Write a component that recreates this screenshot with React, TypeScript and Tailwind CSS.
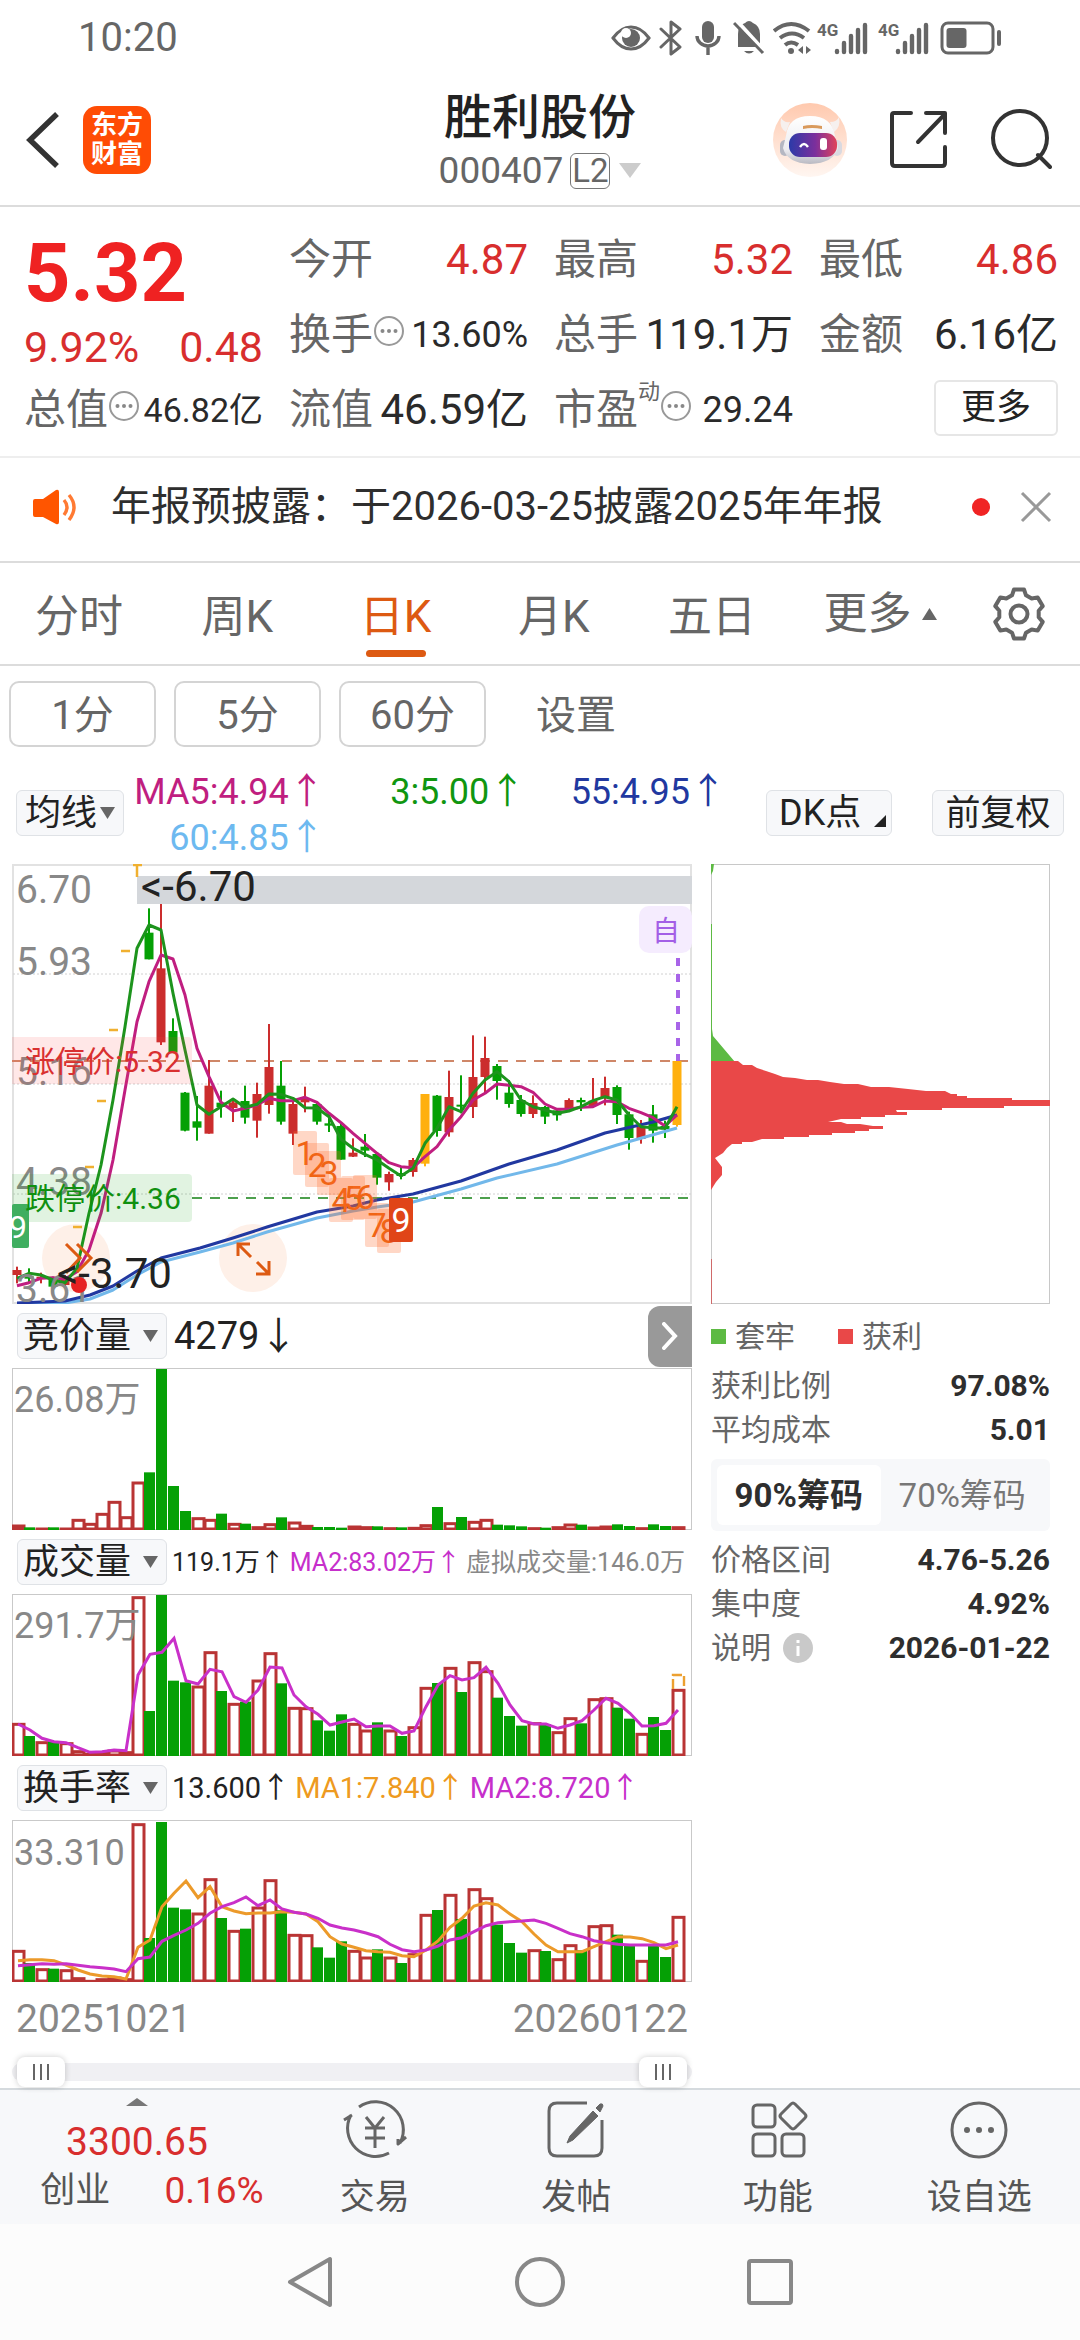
import { useState, type ReactNode } from "react";

/* ---------- chart data ---------- */

type Tone = "r" | "g" | "y";
// tone, wick top, body top, body bottom, wick bottom (thirds of a pixel from y = 850)
type Candle = [Tone, number, number, number, number];

const CANDLES: (Candle | null)[] = [
  ["r", 1250, 1260, 1275, 1300], ["g", 1255, 1278, 1286, 1300], ["r", 1268, 1280, 1286, 1300], ["g", 1280, 1288, 1310, 1325], ["r", 1275, 1290, 1305, 1312],
  null, null, null, null, null, null,
  ["g", 175, 248, 328, 328], ["r", 162, 355, 577, 585], ["g", 505, 543, 608, 608], ["g", 726, 728, 842, 844], ["g", 738, 814, 833, 872],
  ["r", 630, 707, 851, 851], ["g", 722, 758, 771, 803], ["r", 745, 757, 774, 816], ["g", 707, 753, 803, 821], ["r", 698, 732, 812, 863],
  ["r", 522, 651, 765, 791], ["g", 633, 707, 815, 824], ["r", 755, 762, 851, 885], ["r", 710, 744, 757, 787], ["g", 758, 762, 815, 824],
  ["g", 790, 820, 827, 846], ["g", 820, 828, 929, 929], ["r", 865, 908, 920, 921], ["g", 852, 890, 902, 921], ["g", 906, 912, 983, 1004],
  ["r", 965, 972, 997, 1022], ["g", 950, 969, 978, 988], ["r", 924, 930, 966, 980], ["y", 732, 732, 941, 949], ["g", 735, 737, 843, 860],
  ["r", 662, 741, 847, 860], ["g", 676, 764, 770, 790], ["r", 556, 681, 771, 804], ["r", 560, 624, 681, 730], ["g", 642, 648, 693, 749],
  ["g", 690, 728, 762, 773], ["g", 735, 750, 792, 800], ["r", 736, 759, 792, 804], ["g", 768, 771, 800, 822], ["g", 775, 781, 796, 812],
  ["r", 745, 750, 775, 780], ["g", 743, 750, 757, 783], ["r", 684, 752, 768, 772], ["r", 680, 714, 745, 766], ["g", 706, 711, 795, 822],
  ["g", 785, 793, 864, 899], ["r", 810, 830, 867, 881], ["g", 765, 793, 842, 878], ["g", 812, 828, 838, 864], ["y", 633, 633, 825, 830],
];

const MA_GREEN = [1285, 1270, 1275, 1290, 1298, 1255, 1090, 945, 750, 530, 295, 225, 240, 430, 600, 765, 793, 770, 747, 772, 763, 732, 733, 745, 773, 774, 800, 868, 895, 913, 930, 955, 978, 955, 880, 835, 770, 785, 730, 690, 665, 695, 750, 770, 780, 790, 783, 770, 752, 740, 750, 795, 830, 833, 835, 770];
const MA_PINK = [1307, 1298, 1285, 1283, 1287, 1265, 1200, 1090, 930, 720, 515, 395, 315, 327, 435, 595, 680, 757, 783, 775, 765, 745, 752, 752, 742, 757, 790, 818, 850, 880, 910, 938, 950, 953, 920, 890, 840, 800, 750, 730, 702, 706, 710, 727, 762, 778, 778, 772, 770, 753, 755, 775, 788, 803, 828, 795];
const MA_NAVY = "17,1303 65,1301 90,1295 113,1286 137,1271 161,1258 200,1248 233,1238 267,1227 317,1212 353,1206 377,1200 413,1194 461,1181 509,1164 557,1150 605,1133 653,1122 677,1115";
const MA_SKY = "17,1304 65,1303 90,1299 113,1290 137,1275 161,1262 200,1252 233,1243 267,1232 317,1218 353,1211 377,1207 413,1202 461,1189 497,1178 557,1164 617,1145 677,1128";

const AUCTION = "r675 g682 r684 g682 r684 r658 r670 r640 r604 r650 r546 g517 g207 g558 g633 r653 r658 g641 r670 g671 r680 r671 g652 r666 r676 g681 g681 g683 r678 r680 g679 r683 g682 r682 r674 g621 r668 g651 r664 r658 g674 g676 g679 r683 g683 r680 r672 g674 r681 r678 g673 g678 r683 g673 g678 r680".split(" ");
const VOLUME = "r1270 g1308 r1325 g1325 r1328 r1352 r1360 r1355 r1350 r1355 r890 g1233 g885 g1142 g1147 r1158 r1055 g1173 r1210 g1205 r1140 r1058 g1150 r1222 r1223 g1261 g1292 g1243 r1270 r1290 g1267 r1290 g1308 r1280 r1162 g1149 r1102 g1176 r1085 r1112 g1193 g1248 g1277 r1268 g1272 r1295 r1253 g1270 r1196 r1193 g1223 g1256 r1300 g1251 g1290 r1168".split(" ");
const VOL_MA = [1272, 1290, 1315, 1325, 1328, 1343, 1357, 1355, 1350, 1352, 1125, 1063, 1057, 1015, 1142, 1152, 1108, 1115, 1190, 1207, 1170, 1101, 1104, 1185, 1220, 1243, 1275, 1266, 1257, 1280, 1278, 1278, 1300, 1293, 1220, 1155, 1127, 1140, 1133, 1102, 1150, 1215, 1262, 1272, 1272, 1285, 1275, 1262, 1230, 1195, 1210, 1240, 1278, 1277, 1270, 1230];
const TURN_ORANGE = [632, 629, 629, 632, 645, 660, 672, 678, 680, 687, 592, 570, 470, 430, 393, 443, 410, 470, 483, 491, 489, 489, 485, 487, 492, 515, 560, 582, 592, 602, 605, 607, 617, 620, 600, 573, 532, 505, 468, 458, 465, 492, 515, 552, 585, 605, 605, 605, 590, 575, 560, 561, 566, 578, 596, 585];
const TURN_PURPLE = [647, 644, 641, 643, 641, 646, 650, 653, 657, 665, 626, 621, 574, 556, 540, 520, 490, 470, 458, 441, 467, 450, 477, 487, 492, 505, 525, 534, 540, 549, 560, 583, 599, 605, 600, 588, 570, 563, 545, 527, 518, 515, 513, 510, 520, 535, 551, 560, 572, 578, 583, 585, 585, 585, 585, 575];

const RED = "#cb2d2d";
const GREEN = "#05a005";
const FILL: Record<Tone, string> = { r: RED, g: GREEN, y: "#ffb00f" };

const points = (values: number[], base: number, x0 = 17) =>
  values.map((v, i) => `${x0 + 12 * i},${(base + v / 3).toFixed(1)}`).join(" ");

/* ---------- charts ---------- */

const TAGS: [string, number, number][] = [
  ["1", 293, 1131], ["2", 305, 1143], ["3", 317, 1151], ["4", 329, 1178], ["5", 341, 1176], ["6", 353, 1175], ["7", 365, 1203], ["8", 377, 1209],
];

function CandleChart() {
  return (
    <svg viewBox="12 864 680 440" className="block w-full" role="img" aria-label="日K线图">
      <rect x="13" y="865" width="678" height="438" fill="#fff" stroke="#e2e2e2" strokeWidth="2" />
      {[974, 1084, 1194].map((y) => (
        <path key={y} d={`M13 ${y}H691`} stroke="#d0d0d0" strokeDasharray="2 2" />
      ))}
      <rect x="137" y="876" width="555" height="28" fill="#d4d7db" />
      <circle cx="76" cy="1258" r="34" fill="#fef0e8" />
      <circle cx="253" cy="1258" r="34" fill="#fef0e8" />
      <path d="M12 1061H690" stroke="#cf8768" strokeWidth="2" strokeDasharray="10 8" />
      <path d="M192 1198H690" stroke="#4da04d" strokeWidth="2" strokeDasharray="10 8" />
      {CANDLES.map((c, i) => {
        if (!c) return null;
        const [tone, wt, bt, bb, wb] = c;
        const x = 17 + 12 * i;
        return (
          <g key={i} fill={FILL[tone]}>
            <rect x={x - 1} y={850 + wt / 3} width="2" height={(wb - wt) / 3} />
            <rect x={x - 4.5} y={850 + bt / 3} width="9" height={Math.max(2, (bb - bt) / 3)} />
          </g>
        );
      })}
      <g stroke="#f0b030" strokeWidth="2.5" fill="none">
        <path d="M73 1227h9M85 1167h9M97 1101h9M109 1030h9M121 951h9M133 865h9M137 865v12" />
      </g>
      <g fill="none" strokeWidth="3" strokeLinejoin="round">
        <polyline points={MA_SKY} stroke="#72b8ea" />
        <polyline points={MA_NAVY} stroke="#2138a0" />
        <polyline points={points(MA_PINK, 850)} stroke="#c01e80" />
        <polyline points={points(MA_GREEN, 850)} stroke="#1d941d" />
      </g>
      <g fontSize="39" fill="#888">
        <text x="16" y="903">6.70</text>
        <text x="16" y="975">5.93</text>
        <text x="16" y="1085">5.16</text>
        <text x="16" y="1195">4.38</text>
        <text x="16" y="1302">3.61</text>
      </g>
      <path d="M12 1037H188Q192 1037 192 1041V1080Q192 1084 188 1084H12Z" fill="#f44" fillOpacity=".13" />
      <path d="M12 1174H188Q192 1174 192 1178V1218Q192 1222 188 1222H12Z" fill="#1ba01b" fillOpacity=".13" />
      {TAGS.map(([n, x, y]) => (
        <g key={n}>
          <rect x={x} y={y} width="24" height="44" rx="2" fill="#ff6a2b" fillOpacity=".27" />
          <text x={x + 12} y={y + 34} textAnchor="middle" fontSize="34" fill="#f06414">{n}</text>
        </g>
      ))}
      <rect x="389" y="1198" width="24" height="44" rx="2" fill="#e04518" />
      <text x="401" y="1232" textAnchor="middle" fontSize="34" fill="#fff">9</text>
      <rect x="12" y="1204" width="17" height="44" rx="2" fill="#3fae60" />
      <text x="9" y="1238" fontSize="32" fill="#fff">9</text>
      <g fontSize="30">
        <text x="25" y="1072" fill="#d93030">涨停价:5.32</text>
        <text x="25" y="1209" fill="#109010">跌停价:4.36</text>
      </g>
      <circle cx="79" cy="1285" r="8" fill="#e62222" />
      <g fill="none" stroke="#dd5a12" strokeWidth="3">
        <path d="M66 1244l14 14-14 15M77 1244l14 14-14 14" />
        <path d="M238 1256v-12h12M239 1245l12 12M257 1262l12 12M256 1274h13v-13" />
      </g>
      <g fontSize="42" fill="#222">
        <text x="141" y="901">&lt;-6.70</text>
        <text x="57" y="1288">&lt;-3.70</text>
      </g>
      <rect x="639" y="906" width="53" height="47" rx="10" fill="#f5ecfe" />
      <text x="666" y="941" textAnchor="middle" fontSize="28" fill="#a35fe6">自</text>
      <path d="M678 958V1061" stroke="#a864e8" strokeWidth="4" strokeDasharray="8 8" />
    </svg>
  );
}

function Bars({ data, base, floor }: { data: string[]; base: number; floor: number }) {
  return (
    <>
      {data.map((bar, i) => {
        const top = base + Number(bar.slice(1)) / 3;
        const x = 12 + 12 * i;
        return bar[0] === "g" ? (
          <rect key={i} x={x} y={top} width="11" height={floor - top} fill={GREEN} />
        ) : (
          <rect key={i} x={x + 1} y={top + 1} width="11" height={Math.max(1, floor - top - 2)} fill="#fff" stroke="#b93434" strokeWidth="3" />
        );
      })}
    </>
  );
}

function BarChart({ top, name, label, labelY, children }: { top: number; name: string; label: string; labelY: number; children: ReactNode }) {
  return (
    <svg viewBox={`12 ${top} 680 162`} className="block w-full" role="img" aria-label={name}>
      <rect x="12.5" y={top + 0.5} width="679" height="161" fill="#fff" stroke="#c9c9c9" />
      {children}
      <text x="14" y={labelY} fontSize="36" fill="#888">{label}</text>
    </svg>
  );
}

function ChipChart() {
  return (
    <svg viewBox="0 0 339 440" className="block w-full" role="img" aria-label="筹码分布">
      <rect x="0.5" y="0.5" width="338" height="439" fill="#fff" stroke="#c8c8c8" />
      <path d="M0 0h3l-1 7-2 4V0ZM0 60h1V165l1 7 22 26H0Z" fill="#5dba43" />
      <path
        transform="translate(-11 -14)"
        d="M11 211H38l5 4h9l5 3 9 3 9 3 8 3 12 1 12 2h11l12 2 14 2h14l13 3h18l19 2 18 2h19l6 3h6v2h10v2h45l0 2h50v4h-4v2h-54v2H242v2h-46l1 2h10v3h-22v2h-24v2h-20l-13 3h13l6 2h13l13 2h10v3h-14v2h-14v2h-23v2h-23v2H84v2H62l-10 3h-10v2H32l-5 4-4 5-8 5 7 9v8l-6 7-5 8Z"
        fill="#e94848"
      />
      <path d="M0.5 395V440" stroke="#d06a6a" />
    </svg>
  );
}

/* ---------- small pieces ---------- */

function Down({ className }: { className: string }) {
  return (
    <svg viewBox="0 0 16 12" preserveAspectRatio="none" className={className} aria-hidden="true">
      <path d="M0 0h16l-8 12Z" fill="currentColor" />
    </svg>
  );
}

function Picker({ name, options, className }: { name: string; options: string[]; className: string }) {
  return (
    <span className="relative inline-flex shrink-0 items-center">
      <select aria-label={name} className={`h-[46px] appearance-none rounded-md border border-[#dfe2e6] bg-[#f7f8fa] text-[36px] leading-none text-[#222] ${className}`}>
        {options.map((o) => (
          <option key={o}>{o}</option>
        ))}
      </select>
      <Down className="pointer-events-none absolute right-[9px] h-3 w-[15px] text-[#666]" />
    </span>
  );
}

function Dots() {
  return (
    <svg viewBox="0 0 32 32" className="mb-2 size-8 shrink-0" aria-hidden="true">
      <circle cx="16" cy="16" r="14" fill="none" stroke="#999" strokeWidth="2" />
      <g fill="#888">
        <circle cx="9.500" cy="16" r="2" />
        <circle cx="16" cy="16" r="2" />
        <circle cx="22.500" cy="16" r="2" />
      </g>
    </svg>
  );
}

function Quote({ label, value, note, dots, red, small }: { label: string; value: string; note?: string; dots?: boolean; red?: boolean; small?: string }) {
  return (
    <div className="flex h-[75px] items-center justify-between whitespace-nowrap">
      <span className="flex items-center text-[42px] text-[#666]">
        {label}
        {note && <span className="mb-9 text-[22px] leading-none">{note}</span>}
        {dots && <Dots />}
      </span>
      <span className={`${small ?? "text-[42px]"} ${red ? "text-[#d82e2e]" : "text-[#2a2a2a]"}`}>{value}</span>
    </div>
  );
}

function Gear() {
  const pts: string[] = [];
  for (let k = 0; k < 6; k++) {
    const a = (k * Math.PI) / 3 - Math.PI / 2;
    for (const [r, d] of [[20, -0.36], [25, -0.2], [25, 0.2], [20, 0.36]]) {
      pts.push(`${(28 + r * Math.cos(a + d)).toFixed(1)},${(28 + r * Math.sin(a + d)).toFixed(1)}`);
    }
  }
  return (
    <svg viewBox="0 0 56 56" className="size-14" fill="none" stroke="#666" strokeWidth="4" strokeLinejoin="round" aria-hidden="true">
      <polygon points={pts.join(" ")} />
      <circle cx="28" cy="28" r="8.500" />
    </svg>
  );
}

function Signal() {
  return (
    <svg viewBox="0 0 52 34" className="block h-[34px] w-[52px] overflow-visible" aria-hidden="true">
      <text x="0" y="15" fontSize="17" fontWeight="700" fill="#666" fontFamily="'Liberation Sans Narrow', Roboto, sans-serif">4G</text>
      <path d="M20 31V30M27 31V22M34 31V15M41 31V9M48 31V4" stroke="#666" strokeWidth="4.400" strokeLinecap="round" />
    </svg>
  );
}

function StatusIcons() {
  return (
    <div className="flex items-center" aria-hidden="true">
      <svg viewBox="0 0 40 28" className="h-7 w-10">
        <path d="M2 14Q10 3 20 3T38 14Q30 25 20 25T2 14Z" fill="none" stroke="#666" strokeWidth="3" />
        <circle cx="20" cy="14" r="9" fill="#666" />
        <circle cx="15" cy="9" r="5" fill="#fff" />
      </svg>
      <svg viewBox="0 0 24 36" className="ml-2 h-9 w-6" fill="none" stroke="#666" strokeWidth="3" strokeLinejoin="round" strokeLinecap="round">
        <path d="M2 9l19 18-9 7V2l9 7L2 27" />
      </svg>
      <svg viewBox="0 0 26 36" className="ml-3 h-9 w-[26px]">
        <rect x="7" y="1" width="12" height="22" rx="6" fill="#666" />
        <path d="M2 16a11 10 0 0 0 22 0M13 27v8" fill="none" stroke="#666" strokeWidth="3.400" />
      </svg>
      <svg viewBox="0 0 32 36" className="ml-3 h-9 w-8">
        <path d="M5 27V14q0-9 7-11 4-4 8 0 7 3 7 11v13Z" fill="#666" />
        <path d="M11 31h10q-5 5-10 0Z" fill="#666" />
        <path d="M4 1l30 33" stroke="#fff" strokeWidth="4" />
        <path d="M1 3l29 30" stroke="#666" strokeWidth="3" />
      </svg>
      <svg viewBox="0 0 38 36" className="ml-2 h-9 w-[38px]" fill="none" stroke="#666" strokeWidth="4">
        <path d="M1 11q17-14 35 0M7 18q12-9 24 0M12 25q6-5 13 0" />
        <circle cx="18" cy="31" r="3" fill="#666" stroke="none" />
        <path d="M30 26v8l-5-4ZM33 26v8l5-4Z" fill="#666" stroke="none" />
      </svg>
      <span className="ml-[6px]"><Signal /></span>
      <span className="ml-[9px]"><Signal /></span>
      <svg viewBox="0 0 62 34" className="ml-[10px] h-[34px] w-[62px]">
        <rect x="2" y="2" width="51" height="30" rx="6" fill="none" stroke="#666" strokeWidth="3" />
        <rect x="6.500" y="7" width="20" height="20" rx="3" fill="#666" />
        <rect x="57" y="9" width="4" height="16" rx="2" fill="#666" />
      </svg>
    </div>
  );
}

function Robot() {
  return (
    <svg viewBox="0 0 76 76" className="size-[76px]" aria-hidden="true">
      <defs>
        <linearGradient id="halo" x2="0" y2="1">
          <stop stopColor="#ffc9ae" />
          <stop offset="1" stopColor="#fff6f1" />
        </linearGradient>
        <linearGradient id="visor">
          <stop stopColor="#2b3aa8" />
          <stop offset=".55" stopColor="#7c2f9c" />
          <stop offset="1" stopColor="#e0435a" />
        </linearGradient>
        <linearGradient id="shell" x2="0" y2="1">
          <stop stopColor="#fff" />
          <stop offset=".7" stopColor="#ececf0" />
          <stop offset="1" stopColor="#b9b9c2" />
        </linearGradient>
      </defs>
      <circle cx="38" cy="38" r="37" fill="url(#halo)" />
      <path d="M9 16q3 5 9 4l-4 10q-7-4-5-14ZM67 15q-2 5-9 5l4 10q7-5 5-15Z" fill="#f6f0ee" />
      <rect x="8" y="38" width="10" height="16" rx="5" fill="#b5b7c2" />
      <rect x="60" y="38" width="10" height="16" rx="5" fill="#d9d9e0" />
      <path d="M14 34Q16 14 38 14T63 34L66 46Q62 61 38 62 15 61 11 46Z" fill="url(#shell)" />
      <path d="M31 24q8-2 19 0v3q-10-2-19 0Z" fill="#d99a5c" />
      <rect x="17" y="31" width="48" height="24" rx="11" fill="url(#visor)" />
      <path d="M28 45q4-6 8 0" fill="none" stroke="#fff" strokeWidth="2.400" />
      <rect x="48" y="36" width="7" height="12" rx="3" fill="#fff" />
    </svg>
  );
}

function Toolbar({ name, icon }: { name: string; icon: ReactNode }) {
  return (
    <button className="flex flex-1 flex-col items-center pt-2">
      <svg viewBox="0 0 64 64" className="size-16" fill="none" stroke="#666" strokeWidth="3" strokeLinejoin="round" aria-hidden="true">{icon}</svg>
      <span className="mt-[18px] text-[35px] leading-none text-[#555]">{name}</span>
    </button>
  );
}

function Stat({ label, value, info }: { label: string; value: string; info?: boolean }) {
  return (
    <div className="flex h-11 items-center justify-between text-[30px] leading-none">
      <dt className="flex items-center text-[#666]">
        {label}
        {info && (
          <svg viewBox="0 0 30 30" className="ml-3 size-[30px]" aria-hidden="true">
            <circle cx="15" cy="15" r="15" fill="#c9c9c9" />
            <path d="M15 13v10M15 7v3" stroke="#fff" strokeWidth="3" />
          </svg>
        )}
      </dt>
      <dd className="font-bold text-[#2e2e2e]">{value}</dd>
    </div>
  );
}

/* ---------- page ---------- */

const THUMB =
  "pointer-events-none absolute inset-0 m-0 h-full w-full appearance-none bg-transparent [&::-webkit-slider-thumb]:pointer-events-auto [&::-webkit-slider-thumb]:h-[30px] [&::-webkit-slider-thumb]:w-12 [&::-webkit-slider-thumb]:appearance-none [&::-webkit-slider-thumb]:rounded-lg [&::-webkit-slider-thumb]:bg-white [&::-webkit-slider-thumb]:bg-[linear-gradient(90deg,#666_2px,#fff_2px_7px,#666_7px_9px,#fff_9px_14px,#666_14px)] [&::-webkit-slider-thumb]:bg-[length:16px_16px] [&::-webkit-slider-thumb]:bg-center [&::-webkit-slider-thumb]:bg-no-repeat [&::-webkit-slider-thumb]:shadow-[0_0_6px_rgba(0,0,0,0.2)]";

export default function App() {
  const [tab, setTab] = useState("日K");
  const [range, setRange] = useState("90");
  const [from, setFrom] = useState(0);
  const [to, setTo] = useState(100);

  return (
    <div className="flex min-h-screen flex-col bg-white font-[Roboto,'Noto_Sans_CJK_SC',sans-serif] leading-none text-[#222]">
      <div className="flex h-[74px] items-center justify-between pl-[78px] pr-[78px] pt-[2px] text-[40px] text-[#666]">
        <span>10:20</span>
        <StatusIcons />
      </div>

      <header className="grid h-[133px] grid-cols-[1fr_auto_1fr] items-center border-b-2 border-[#dcdcdc]">
        <div className="flex items-center pl-6">
          <button aria-label="返回">
            <svg viewBox="0 0 38 60" className="h-[60px] w-[38px]" fill="none" stroke="#333" strokeWidth="5.500" aria-hidden="true">
              <path d="M33 4L6 30l27 26" />
            </svg>
          </button>
          <span className="ml-[21px] grid size-[68px] place-content-center rounded-[14px] bg-[#ff4c05] text-center text-[26px] font-bold leading-[29px] text-white">
            <span>东方</span>
            <span>财富</span>
          </span>
        </div>
        <div className="flex flex-col items-center">
          <h1 className="text-[48px] font-medium leading-[54px]">胜利股份</h1>
          <button className="mt-2 flex h-9 items-center gap-[7px] text-[37px] text-[#666]">
            <span>000407</span>
            <span className="flex h-9 w-10 items-center justify-center rounded-md border-[1px] border-[#777] text-[33px] leading-none">L2</span>
            <Down className="ml-[2px] h-[15px] w-[22px] text-[#ccc]" />
          </button>
        </div>
        <div className="flex items-center justify-end pr-7">
          <button aria-label="智能助手"><Robot /></button>
          <button aria-label="分享" className="ml-10">
            <svg viewBox="0 0 62 62" className="size-[62px]" fill="none" stroke="#333" strokeWidth="4" strokeLinecap="round" strokeLinejoin="round" aria-hidden="true">
              <path d="M23 4H6Q4 4 4 6V54Q4 57 7 57H54Q57 57 57 54V38M38 4H57V24M56 6L30 33" />
            </svg>
          </button>
          <button aria-label="搜索" className="ml-10">
            <svg viewBox="0 0 62 62" className="size-[62px]" fill="none" stroke="#333" strokeWidth="4" strokeLinecap="round" aria-hidden="true">
              <circle cx="30" cy="29" r="27" />
              <path d="M48 46L60 58" />
            </svg>
          </button>
        </div>
      </header>

      <section className="grid grid-cols-4 gap-x-[26px] border-b-2 border-[#eee] pb-[9px] pl-6 pr-[22px] pt-[15px]">
        <div className="row-span-2 text-[#ef2222]">
          <div className="flex h-[102px] items-center text-[81px] font-bold">5.32</div>
          <div className="flex items-center justify-between text-[43px] leading-[46px] text-[#d82e2e]">
            <span>9.92%</span>
            <span>0.48</span>
          </div>
        </div>
        <Quote label="今开" value="4.87" red />
        <Quote label="最高" value="5.32" red />
        <Quote label="最低" value="4.86" red />
        <Quote label="换手" value="13.60%" dots small="text-[36px]" />
        <Quote label="总手" value="119.1万" />
        <Quote label="金额" value="6.16亿" />
        <Quote label="总值" value="46.82亿" dots small="text-[34px]" />
        <Quote label="流值" value="46.59亿" />
        <Quote label="市盈" value="29.24" note="动" dots small="text-[36px]" />
        <button className="mb-1 h-14 w-[124px] self-center justify-self-end rounded-md border-2 border-[#e6e6e6] text-[35px]">更多</button>
      </section>

      <section className="flex h-[105px] items-center border-b-2 border-[#dcdcdc] pb-[5px] pl-[33px] pr-7">
        <svg viewBox="0 0 46 36" className="h-9 w-[46px]" aria-hidden="true">
          <path d="M2 10h8L23 1q3-1 3 2V33q0 3-3 2L10 28H2Q0 28 0 26V12Q0 10 2 10Z" fill="#ff5500" />
          <path d="M31 11q6 7 0 15M36 6q10 12 0 25" fill="none" stroke="#ff7a33" strokeWidth="3.400" />
        </svg>
        <a href="#notice" className="ml-8 whitespace-nowrap text-[40px] text-[#2e2e2e]">年报预披露：于2026-03-25披露2025年年报</a>
        <span className="ml-auto size-[18px] rounded-full bg-[#f02424]" />
        <button aria-label="关闭" className="ml-[30px]">
          <svg viewBox="0 0 32 32" className="size-8" stroke="#999" strokeWidth="3" aria-hidden="true">
            <path d="M2 2l28 28M30 2L2 30" />
          </svg>
        </button>
      </section>

      <nav className="grid h-[103px] grid-cols-[repeat(5,160fr)_180fr_100fr] border-b-2 border-[#dcdcdc] pr-3 text-[44px] text-[#666]">
        {["分时", "周K", "日K", "月K", "五日"].map((t) => (
          <button key={t} onClick={() => setTab(t)} className={`flex flex-col items-center pt-[31px] ${tab === t ? "text-[#dd5a12]" : ""}`}>
            <span className="leading-[46px]">{t}</span>
            {tab === t && <span className="mt-[10px] h-[7px] w-[60px] rounded-full bg-[#dd5a12]" />}
          </button>
        ))}
        <button className="flex items-center justify-center gap-[10px]">
          更多
          <Down className="h-3 w-[15px] rotate-180" />
        </button>
        <button aria-label="图表设置" className="flex items-center justify-center"><Gear /></button>
      </nav>

      <div className="flex items-center gap-[18px] px-[9px] pt-[15px] text-[40px] text-[#666]">
        {["1分", "5分", "60分"].map((t) => (
          <button key={t} className="h-[66px] w-[147px] rounded-[10px] border-2 border-[#d4d4d4] pt-1">{t}</button>
        ))}
        <button className="h-[66px] px-8 pt-1">设置</button>
      </div>

      <div className="flex items-center px-4 pb-[3px] pt-[18px]">
        <Picker name="均线" options={["均线"]} className="w-[108px] pl-2" />
        <div className="grid flex-1 grid-cols-3 whitespace-nowrap pt-1 text-right text-[36px] leading-[46px]">
          <span className="text-[#c01e80]">MA5:4.94↑</span>
          <span className="text-[#109610]">3:5.00↑</span>
          <span className="text-[#2138a0]">55:4.95↑</span>
          <span className="text-[#6db9f0]">60:4.85↑</span>
        </div>
        <button className="ml-10 flex h-[46px] w-[126px] items-center justify-between rounded-md border border-[#dfe2e6] bg-[#f7f8fa] pl-3 pr-[5px] text-[36px]">
          DK点
          <svg viewBox="0 0 12 12" className="mt-4 w-3" aria-hidden="true"><path d="M12 0V12H0Z" fill="#222" /></svg>
        </button>
        <button className="ml-10 h-[46px] w-[132px] rounded-md border border-[#dfe2e6] bg-[#f7f8fa] text-[35px]">前复权</button>
      </div>

      <main className="grid grid-cols-[680fr_339fr] gap-x-[19px] pl-3 pr-[30px]">
        <div className="min-w-0">
          <CandleChart />
          <div className="flex h-16 items-center pl-[5px] text-[38px]">
            <Picker name="副图一" options={["竞价量", "成交量"]} className="w-[150px] pl-[5px]" />
            <span className="ml-[7px]">4279↓</span>
            <button aria-label="展开" className="ml-auto flex h-[61px] w-11 items-center justify-center rounded-l-xl bg-[#999]">
              <svg viewBox="0 0 16 28" className="w-4" fill="none" stroke="#fff" strokeWidth="4" strokeLinecap="round" aria-hidden="true"><path d="M2 2l11 12L2 26" /></svg>
            </button>
          </div>
          <BarChart top={1368} name="竞价量" label="26.08万" labelY={1412}>
            <Bars data={AUCTION} base={1300} floor={1530} />
          </BarChart>
          <div className="flex h-16 items-center gap-[5px] whitespace-nowrap pl-[5px] text-[25px]">
            <Picker name="副图二" options={["成交量", "竞价量"]} className="w-[150px] pl-[5px]" />
            <span>119.1万↑</span>
            <span className="text-[#c62fcb]">MA2:83.02万↑</span>
            <span className="text-[#888]">虚拟成交量:146.0万</span>
          </div>
          <BarChart top={1594} name="成交量" label="291.7万" labelY={1638}>
            <Bars data={VOLUME} base={1300} floor={1756} />
            <path d="M673 1689V1675H684V1689" fill="none" stroke="#eca030" strokeWidth="2.400" strokeDasharray="10 3" />
            <polyline points={points(VOL_MA, 1300, 18)} fill="none" stroke="#c930c9" strokeWidth="3" />
          </BarChart>
          <div className="flex h-16 items-center gap-[5px] whitespace-nowrap pl-[5px] text-[29px]">
            <Picker name="副图三" options={["换手率", "成交量"]} className="w-[150px] pl-[5px]" />
            <span>13.600↑</span>
            <span className="text-[#ee9a20]">MA1:7.840↑</span>
            <span className="text-[#c62fcb]">MA2:8.720↑</span>
          </div>
          <BarChart top={1820} name="换手率" label="33.310" labelY={1865}>
            <Bars data={VOLUME} base={1527} floor={1982} />
            <g fill="none" strokeWidth="3">
              <polyline points={points(TURN_ORANGE, 1750, 18)} stroke="#ec9a2a" />
              <polyline points={points(TURN_PURPLE, 1750, 18)} stroke="#c930c9" />
            </g>
          </BarChart>
          <div className="flex h-[74px] items-center justify-between px-[4px] text-[39px] text-[#888]">
            <span>20251021</span>
            <span>20260122</span>
          </div>
          <div className="flex h-8 items-center rounded-full">
            <div className="flex h-[18px] w-full items-center rounded-full bg-[#f0f0f3] px-[5px]">
              <div className="relative h-8 w-full">
                <input type="range" aria-label="开始日期" value={from} onChange={(e) => setFrom(Number(e.target.value))} className={THUMB} />
                <input type="range" aria-label="结束日期" value={to} onChange={(e) => setTo(Number(e.target.value))} className={THUMB} />
              </div>
            </div>
          </div>
        </div>

        <aside className="min-w-0">
          <ChipChart />
          <div className="flex h-[60px] items-center pt-[5px] text-[30px] text-[#666]">
            <span className="mr-[9px] size-[15px] bg-[#5dba43]" />套牢
            <span className="ml-[43px] mr-[9px] size-[15px] bg-[#e94848]" />获利
          </div>
          <dl>
            <Stat label="获利比例" value="97.08%" />
            <Stat label="平均成本" value="5.01" />
          </dl>
          <div className="mb-[7px] mt-[7px] flex h-[72px] rounded-md bg-[#f7f8fa] p-[6px] text-[33px]">
            {["90", "70"].map((r) => (
              <button key={r} onClick={() => setRange(r)} className={`flex-1 rounded-md ${range === r ? "bg-white font-bold text-[#2e2e2e]" : "text-[#777]"}`}>{r}%筹码</button>
            ))}
          </div>
          <dl>
            <Stat label="价格区间" value="4.76-5.26" />
            <Stat label="集中度" value="4.92%" />
            <Stat label="说明" value="2026-01-22" info />
          </dl>
        </aside>
      </main>

      <footer className="flex h-[136px] border-t-2 border-[#d5dade] bg-[#f7f8fa]">
        <button className="flex w-[274px] flex-col items-center pt-2 text-[#d82e2e]">
          <Down className="h-2 w-[22px] rotate-180 text-[#777]" />
          <span className="mt-[14px] text-[39px] leading-[44px]">3300.65</span>
          <span className="mt-1 flex items-center gap-[54px] whitespace-nowrap pl-[30px] text-[37px] leading-[46px]">
            <span className="text-[35px] text-[#555]">创业</span>
            <span>0.16%</span>
          </span>
        </button>
        <Toolbar
          name="交易"
          icon={
            <>
              <path d="M16 9A28 28 0 0 1 57 45M46 55A28 28 0 0 1 8 17M1 22l8-5M63 39l-8 7v-5" />
              <path d="M23 19l9 11 9-11M22 30H42M22 40H42M32 30V50" />
            </>
          }
        />
        <Toolbar
          name="发帖"
          icon={
            <>
              <path d="M43 5H13Q5 5 5 13V50Q5 58 13 58H50Q58 58 58 50V22" />
              <path d="M49 13l5 5L29 42l-6 3 3-7ZM52 10l4-4q3-1 3 2l-3 6Z" fill="#666" strokeWidth="1" />
            </>
          }
        />
        <Toolbar
          name="功能"
          icon={
            <>
              <rect x="7" y="7" width="22" height="22" rx="4" />
              <rect x="7" y="36" width="22" height="22" rx="4" />
              <rect x="36" y="36" width="22" height="22" rx="4" />
              <path d="M45 6q2-2 4 0l10 10q2 2 0 4l-10 10q-2 2-4 0L35 20q-2-2 0-4Z" />
            </>
          }
        />
        <Toolbar
          name="设自选"
          icon={
            <>
              <circle cx="32" cy="32" r="27" />
              <g fill="#666" stroke="none">
                <circle cx="20" cy="32" r="3" />
                <circle cx="32" cy="32" r="3" />
                <circle cx="44" cy="32" r="3" />
              </g>
            </>
          }
        />
      </footer>

      <nav className="flex min-h-[115px] flex-1 items-center justify-center gap-[174px] bg-[#fcfcfc]" aria-label="系统导航">
        <button aria-label="后退">
          <svg viewBox="0 0 56 56" className="size-14" fill="none" stroke="#888" strokeWidth="4" strokeLinejoin="round"><path d="M48 5V51L8 28Z" /></svg>
        </button>
        <button aria-label="主屏幕">
          <svg viewBox="0 0 56 56" className="size-14" fill="none" stroke="#888" strokeWidth="4"><circle cx="28" cy="28" r="23" /></svg>
        </button>
        <button aria-label="最近任务">
          <svg viewBox="0 0 56 56" className="size-14" fill="none" stroke="#888" strokeWidth="4"><rect x="7" y="7" width="42" height="42" rx="2" /></svg>
        </button>
      </nav>
    </div>
  );
}
